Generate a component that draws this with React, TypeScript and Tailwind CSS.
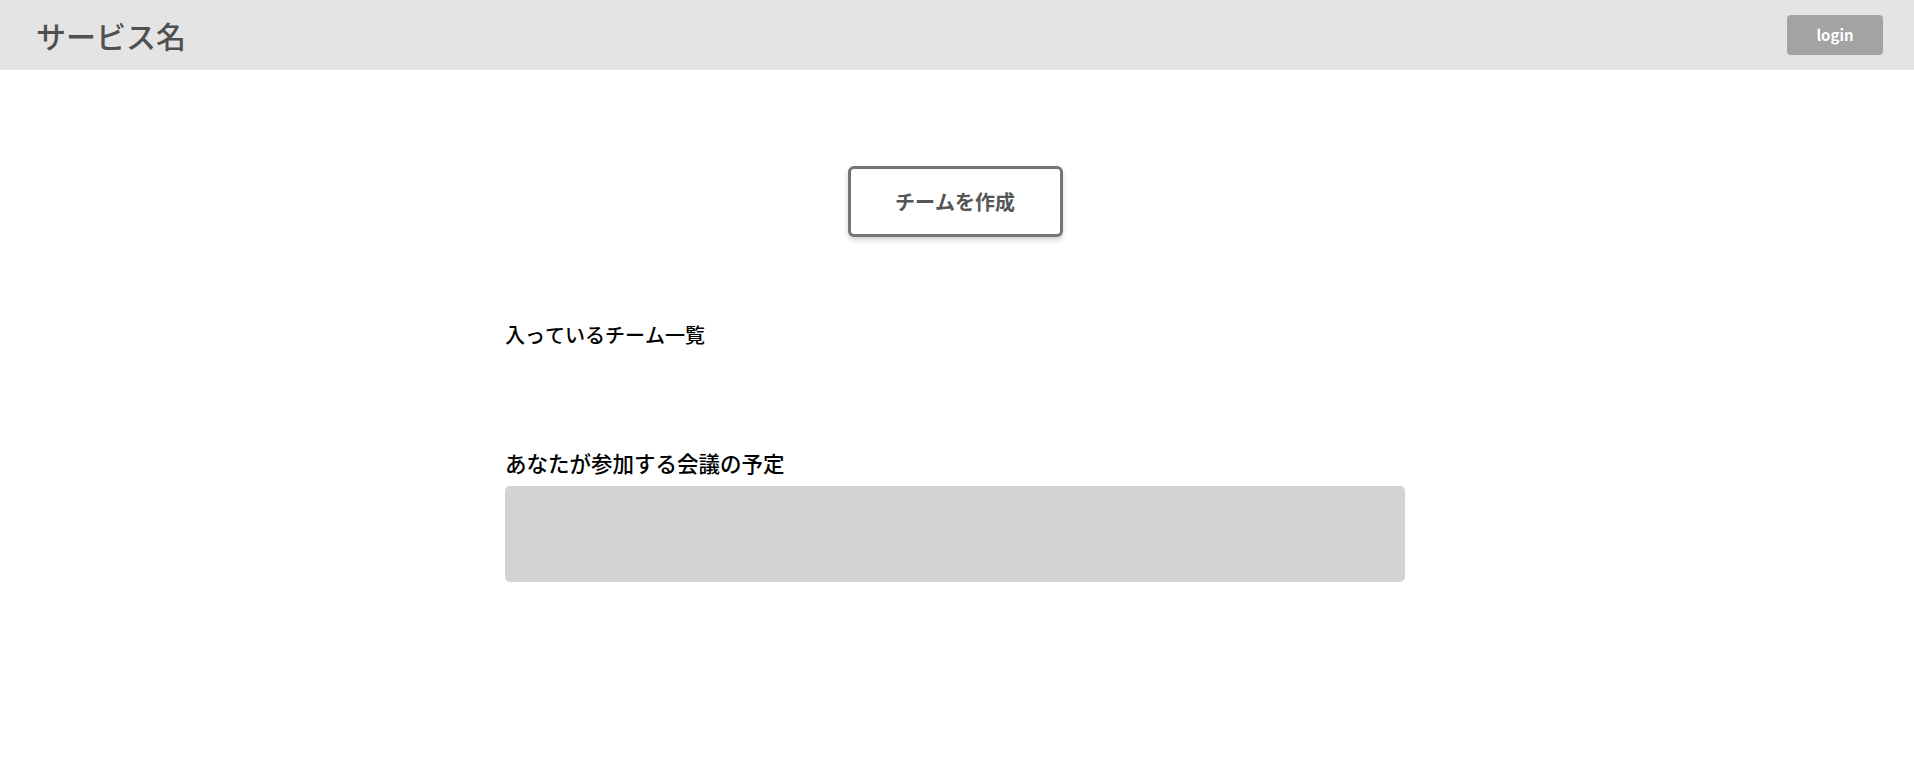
import React from "react";

export default function App() {
  return (
    <div
      className="min-h-screen bg-white [font-kerning:none]"
      style={{ fontFamily: '"Noto Sans CJK JP", "Noto Sans", sans-serif' }}
    >
      <header className="flex h-[70px] items-center justify-between bg-[#e4e4e4] pl-[36px] pr-[31px]">
        <h1 className="text-[30px] leading-none font-medium text-[#505050]">サービス名</h1>
        <button className="h-[40px] w-[96px] rounded-[4px] bg-[#a3a3a3] text-[15px] font-bold text-white">
          login
        </button>
      </header>
      <div className="pr-[4px]">
        <main className="mx-auto w-[900px] pt-[96px]">
          <div className="flex justify-center">
            <button className="h-[71px] w-[215px] rounded-[6px] border-[3px] border-[#757575] bg-white text-[20px] font-bold text-[#555555] shadow-[0_3px_5px_rgba(0,0,0,0.18)]">
              チームを作成
            </button>
          </div>
          <h2 className="mt-[84px] text-[20px] leading-[28px] font-medium text-black">入っているチーム一覧</h2>
          <h2 className="mt-[100px] text-[21.5px] leading-[28px] font-medium text-black">あなたが参加する会議の予定</h2>
          <div className="mt-[9px] h-[96px] rounded-[5px] bg-[#d3d3d3]" />
        </main>
      </div>
    </div>
  );
}
